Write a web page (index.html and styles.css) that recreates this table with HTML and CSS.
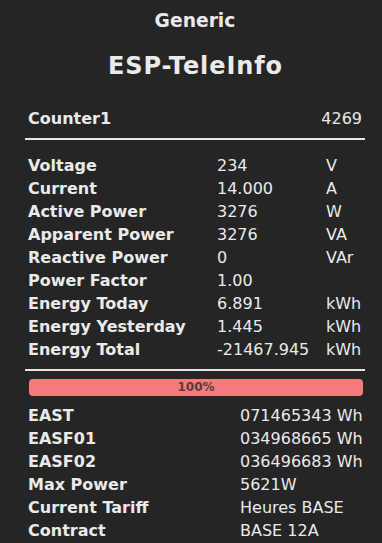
FILE: index.html
```html
<!DOCTYPE html>
<html>
<head>
<meta charset="utf-8">
<link rel="stylesheet" href="styles.css">
</head>
<body>
<div class="page">
  <div class="head">
    <h3 class="dev">Generic</h3>
    <h2 class="name">ESP-TeleInfo</h2>
  </div>
  <div class="counter">
    <span class="lbl">Counter1</span>
    <span class="cval">4269</span>
  </div>
  <hr class="rule rule-a">
  <div class="kv3">
    <span class="lbl">Voltage</span><span>234</span><span>V</span>
    <span class="lbl">Current</span><span>14.000</span><span>A</span>
    <span class="lbl">Active Power</span><span>3276</span><span>W</span>
    <span class="lbl">Apparent Power</span><span>3276</span><span>VA</span>
    <span class="lbl">Reactive Power</span><span>0</span><span>VAr</span>
    <span class="lbl">Power Factor</span><span>1.00</span><span></span>
    <span class="lbl">Energy Today</span><span>6.891</span><span>kWh</span>
    <span class="lbl">Energy Yesterday</span><span>1.445</span><span>kWh</span>
    <span class="lbl">Energy Total</span><span>-21467.945</span><span>kWh</span>
  </div>
  <hr class="rule rule-b">
  <div class="bar">100%</div>
  <div class="kv2">
    <span class="lbl">EAST</span><span>071465343 Wh</span>
    <span class="lbl">EASF01</span><span>034968665 Wh</span>
    <span class="lbl">EASF02</span><span>036496683 Wh</span>
    <span class="lbl">Max Power</span><span>5621W</span>
    <span class="lbl">Current Tariff</span><span>Heures BASE</span>
    <span class="lbl">Contract</span><span>BASE 12A</span>
  </div>
</div>
</body>
</html>
```
FILE: styles.css
```css
html, body {
  margin: 0;
  padding: 0;
  background: #252525;
}
body {
  font-family: Verdana, "DejaVu Sans", sans-serif;
  color: #eaeaea;
  font-size: 16px;
  line-height: 19px;
}
.page {
  width: 340px;
  padding: 10px 0 0 25px;
}
.head {
  text-align: center;
}
.dev {
  margin: 0;
  font-size: 18.72px;
  line-height: 22px;
  font-weight: bold;
}
.name {
  margin: 20px 0 0;
  font-size: 24px;
  line-height: 28px;
  font-weight: bold;
  letter-spacing: 0.9px;
  text-indent: 0.9px;
}
.lbl {
  font-weight: bold;
  white-space: nowrap;
}
.counter {
  display: flex;
  justify-content: space-between;
  margin-top: 29px;
  padding: 0 3px;
}
.rule {
  height: 0;
  border: 0;
  border-top: 2px solid #e6e6e6;
  margin: 0;
}
.rule-a {
  margin-top: 10px;
}
.kv3 {
  display: grid;
  grid-template-columns: 189px 109px 1fr;
  row-gap: 4px;
  margin-top: 16px;
  padding-left: 3px;
  white-space: nowrap;
}
.rule-b {
  margin-top: 10px;
}
.bar {
  margin: 8px 2px 0 4px;
  height: 17px;
  line-height: 17px;
  background: #f77a7a;
  border-radius: 4px;
  color: #553c3c;
  font-size: 12px;
  font-weight: bold;
  text-align: center;
}
.kv2 {
  display: grid;
  grid-template-columns: 212px 1fr;
  row-gap: 4px;
  margin-top: 10px;
  padding-left: 3px;
  white-space: nowrap;
}
```
